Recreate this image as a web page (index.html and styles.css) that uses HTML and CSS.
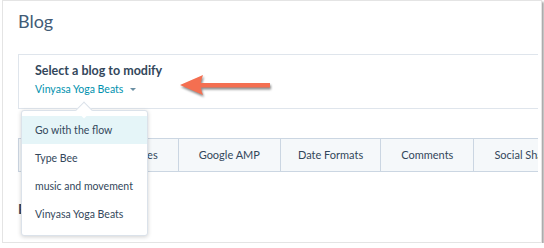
FILE: index.html
```html
<!DOCTYPE html>
<html lang="en">
<head>
    <meta charset="UTF-8">
    <meta name="viewport" content="width=device-width, initial-scale=1.0">
    <title>Blog</title>
    <link rel="stylesheet" href="styles.css">
</head>
<body>
    <div class="window">
        <h1 class="page-title">Blog</h1>
        <div class="blog-card">
            <div class="blog-label">Select a blog to modify</div>
            <div class="blog-select">Vinyasa Yoga Beats <span class="caret"></span></div>
        </div>
        <div class="tabs">
            <div class="tab tab-first">Templates</div>
            <div class="tab">Google AMP</div>
            <div class="tab tab-narrow">Date Formats</div>
            <div class="tab">Comments</div>
            <div class="tab">Social Sharing</div>
        </div>
        <h2 class="section-title">Blog root URL</h2>

        <ul class="dropdown">
            <li class="active">Go with the flow</li>
            <li>Type Bee</li>
            <li>music and movement</li>
            <li>Vinyasa Yoga Beats</li>
        </ul>

        <svg class="callout" width="100" height="30" viewBox="0 0 100 30">
            <path d="M2 14 L25 4 Q23 10 23 12 L92 12 L92 16.5 L23 16.5 Q23 19 25 24 Z" fill="#f46f51"/>
        </svg>
    </div>
</body>
</html>
```

FILE: styles.css
```css
body {
    margin: 0;
    background: #ffffff;
    font-family: Lato, "Open Sans", sans-serif;
    color: #33475b;
}
.window {
    position: relative;
    box-sizing: border-box;
    width: 540px;
    height: 243px;
    margin-left: 2px;
    padding: 0 3px 0 15px;
    border: 1px solid #e4e4e4;
    box-shadow: 2px 2px 2px rgba(0, 0, 0, 0.35);
    overflow: hidden;
}
.page-title {
    margin: 0;
    padding-top: 9px;
    height: 44px;
    font-size: 18px;
    font-weight: normal;
    line-height: 22px;
    color: #425b76;
}
.blog-card {
    height: 55px;
    box-sizing: border-box;
    padding: 7px 16px 0;
    border: 1px solid #dfe5ec;
    border-right: none;
}
.blog-label {
    font-size: 12.5px;
    font-weight: bold;
    line-height: 18px;
    color: #33475b;
}
.blog-select {
    font-size: 10.5px;
    line-height: 18px;
    color: #0091ae;
}
.caret {
    display: inline-block;
    margin-left: 4px;
    vertical-align: 2px;
    border-left: 3px solid transparent;
    border-right: 3px solid transparent;
    border-top: 3px solid #6a8fa3;
}
.tabs {
    display: flex;
    margin-top: 29px;
    height: 34px;
    box-sizing: border-box;
    border: 1px solid #cbd6e2;
    border-right: none;
    background: #f5f8fa;
    overflow: hidden;
}
.tab {
    flex: none;
    padding: 0 20px;
    font-size: 11px;
    line-height: 32px;
    white-space: nowrap;
    border-left: 1px solid #cbd6e2;
    color: #33475b;
}
.tab:first-child {
    border-left: none;
}
.tab-first {
    padding-left: 90px;
}
.tab-narrow {
    padding: 0 17px;
}
.section-title {
    margin: 28px 0 0;
    font-size: 14px;
    font-weight: bold;
    line-height: 18px;
    color: #33475b;
}
.dropdown {
    position: absolute;
    left: 18px;
    top: 109px;
    width: 127px;
    height: 126px;
    box-sizing: border-box;
    margin: 0;
    padding: 5px 0 0;
    list-style: none;
    background: #ffffff;
    border: 1px solid #dbe2ea;
    border-radius: 3px;
    box-shadow: 0 1px 4px rgba(0, 0, 0, 0.18);
}
.dropdown::before {
    content: "";
    position: absolute;
    left: 56px;
    top: -7px;
    width: 11px;
    height: 11px;
    background: #ffffff;
    border-top: 1px solid #dbe2ea;
    border-left: 1px solid #dbe2ea;
    transform: rotate(45deg);
}
.dropdown li {
    height: 28px;
    padding-left: 13px;
    font-size: 10.5px;
    line-height: 28px;
    color: #33475b;
    white-space: nowrap;
}
.dropdown li.active {
    background: #e5f5f8;
}
.callout {
    position: absolute;
    left: 175px;
    top: 70px;
    filter: drop-shadow(1px 2px 1px rgba(0, 0, 0, 0.45));
}
```
